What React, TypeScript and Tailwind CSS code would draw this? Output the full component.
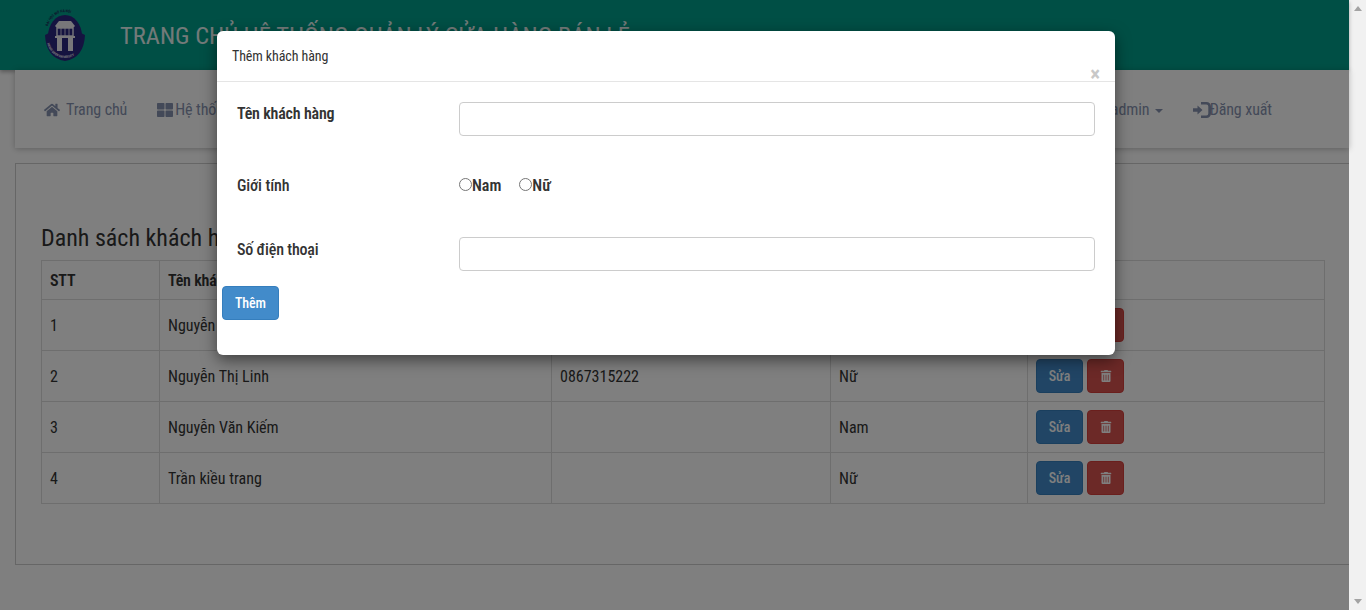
import React from 'react';
import { FaHome, FaThLarge, FaTrashAlt } from 'react-icons/fa';

const customers = [
  { id: 1, name: 'Nguyễn Văn Nam', phone: '0867315111', gender: 'Nam' },
  { id: 2, name: 'Nguyễn Thị Linh', phone: '0867315222', gender: 'Nữ' },
  { id: 3, name: 'Nguyễn Văn Kiếm', phone: '', gender: 'Nam' },
  { id: 4, name: 'Trần kiều trang', phone: '', gender: 'Nữ' },
];

const Logo = () => (
  <svg width="46" height="54" viewBox="0 0 46 54" className="shrink-0">
    {/* crest body */}
    <ellipse cx="23" cy="28" rx="17" ry="21" fill="#2a2680" />
    <path d="M3 27 L7 25 L7 30 Q9 45 23 47 Q37 45 39 30 L39 25 L43 27 Q42 50 23 53 Q4 50 3 27 Z" fill="#2a2680" />
    <path id="logo-top" d="M5 24 A18 20 0 0 1 41 24" fill="none" />
    <text fontSize="3.6" fontWeight="700" fill="#1c2c5a" fontFamily="Roboto, sans-serif">
      <textPath href="#logo-top" startOffset="10%">ĐẠI HỌC MỞ HÀ NỘI</textPath>
    </text>
    {/* gate */}
    <path d="M13 18 L17 13 L29 13 L33 18 L31 20 L15 20 Z" fill="#f0eef5" />
    <rect x="15" y="20" width="16" height="8" fill="none" stroke="#f0eef5" strokeWidth="1.4" />
    <path d="M19 20 V28 M23 20 V28 M27 20 V28" stroke="#f0eef5" strokeWidth="0.8" />
    <rect x="13" y="28" width="20" height="2" fill="#f0eef5" />
    <rect x="15" y="30" width="5" height="13" fill="#f0eef5" />
    <rect x="26" y="30" width="5" height="13" fill="#f0eef5" />
    <path id="logo-bottom" d="M5 32 A18 18 0 0 0 41 32" fill="none" />
    <text fontSize="3.3" fontWeight="700" fill="#e4e4f0" fontFamily="Roboto, sans-serif">
      <textPath href="#logo-bottom" startOffset="6%">HANOI OPEN UNIVERSITY</textPath>
    </text>
  </svg>
);

const SignInIcon = () => (
  <svg width="18" height="16" viewBox="0 0 18 16" fill="currentColor" className="shrink-0">
    <path d="M0 6.2h4.5V3.5L9.5 8l-5 4.5V9.8H0z" />
    <path d="M8 0h5.5A4.5 4.5 0 0 1 18 4.5v7a4.5 4.5 0 0 1-4.5 4.5H8v-2.6h5.3a2 2 0 0 0 2-2V4.6a2 2 0 0 0-2-2H8z" />
  </svg>
);

const App: React.FC = () => {
  return (
    <div className="flex h-[610px] w-[1366px] overflow-hidden font-['Roboto_Condensed','Roboto',sans-serif] [font-stretch:75%] text-[#333]">
      <div className="relative h-full w-[1349px] bg-white">
        {/* Header */}
        <div className="flex h-[70px] items-center bg-[#009e8a] pl-[42px] shadow-[0_2px_4px_rgba(0,0,0,0.3)]">
          <Logo />
          <h1 className="ml-[32px] pt-[2px] text-[24.5px] text-[#fff] opacity-90">TRANG CHỦ HỆ THỐNG QUẢN LÝ CỬA HÀNG BÁN LẺ</h1>
        </div>

        {/* Nav */}
        <div className="ml-[15px] flex h-[78px] items-center justify-between bg-white pl-[29px] pr-[77px] pt-[2px] text-[16px] tracking-[-0.1px] text-[#8793b0] shadow-[0_1px_6px_rgba(0,0,0,0.25)]">
          <div className="flex items-center">
            <span className="flex items-center gap-[6px]"><FaHome size={16} />Trang chủ</span>
            <span className="ml-[30px] flex items-center gap-[2px]"><FaThLarge size={16} />Hệ thống</span>
          </div>
          <div className="flex items-center">
            <span className="flex items-center">admin<span className="ml-[6px] mt-[2px] border-x-[4px] border-t-[4px] border-x-transparent border-t-[#8793b0]" /></span>
            <span className="ml-[30px] flex items-center"><SignInIcon /><span className="-ml-[2px]">Đăng xuất</span></span>
          </div>
        </div>

        {/* Customers panel */}
        <div className="ml-[15px] mt-[15px] h-[402px] border border-r-0 border-[#ccc] pl-[25px] pt-[56px]">
          <h2 className="mb-[4px] text-[24px] leading-[36px] text-[#333]">Danh sách khách hàng</h2>
          <table className="w-[1284px] table-fixed border-collapse text-[16px]">
            <thead>
              <tr className="h-[39px] font-semibold tracking-[-0.2px]">
                <td className="w-[118px] border border-[#ddd] px-[8px] pt-[2px]">STT</td>
                <td className="w-[392px] border border-[#ddd] px-[8px] pt-[2px]">Tên khách hàng</td>
                <td className="w-[279px] border border-[#ddd] px-[8px] pt-[2px]">Số điện thoại</td>
                <td className="w-[197px] border border-[#ddd] px-[8px] pt-[2px]">Giới tính</td>
                <td className="border border-[#ddd] px-[8px] pt-[2px]">Thao tác</td>
              </tr>
            </thead>
            <tbody>
              {customers.map((c) => (
                <tr key={c.id} className="h-[51px]">
                  <td className="border border-[#ddd] px-[8px] pt-[2px]">{c.id}</td>
                  <td className="border border-[#ddd] px-[8px] pt-[2px]">{c.name}</td>
                  <td className="border border-[#ddd] px-[8px] pt-[2px]">{c.phone}</td>
                  <td className="border border-[#ddd] px-[8px] pt-[2px]">{c.gender}</td>
                  <td className="border border-[#ddd] px-[8px]">
                    <div className="flex gap-[4px]">
                      <button className="h-[34px] w-[47px] rounded-[4px] border border-[#357ebd] bg-[#428bca] text-[14px] font-medium text-white">Sửa</button>
                      <button className="flex h-[34px] w-[37px] items-center justify-center rounded-[4px] border border-[#d43f3a] bg-[#d9534f] text-white"><FaTrashAlt size={12} /></button>
                    </div>
                  </td>
                </tr>
              ))}
            </tbody>
          </table>
        </div>

        {/* Backdrop */}
        <div className="absolute inset-0 bg-black/50" />

        {/* Modal */}
        <div className="absolute left-[217px] top-[31px] h-[324px] w-[898px] rounded-[6px] bg-white shadow-[0_5px_15px_rgba(0,0,0,0.5)]">
          <div className="relative flex h-[51px] items-center border-b border-[#e5e5e5] pl-[15px] text-[14px] tracking-[-0.1px] text-[#333]">
            Thêm khách hàng
            <span className="absolute right-[15px] top-[31px] text-[21px] font-bold leading-[24px] text-[#c8c8c8]">×</span>
          </div>
          <div className="flex pl-[20px] pr-[20px] pt-[20px]">
            <label className="w-[222px] pt-[1px] text-[16px] font-semibold leading-[22px] tracking-[-0.2px]">Tên khách hàng</label>
            <input className="h-[34px] flex-1 rounded-[4px] border border-[#ccc] bg-white" />
          </div>
          <div className="mt-[38px] flex items-center pl-[20px] text-[16px]">
            <label className="w-[222px] font-medium tracking-[-0.1px]">Giới tính</label>
            <span className="-mt-[1px] flex items-center font-semibold"><span className="-mt-[3px] h-[13px] w-[13px] rounded-full border border-[#767676]" />Nam</span>
            <span className="-mt-[1px] ml-[18px] flex items-center font-semibold"><span className="-mt-[3px] h-[13px] w-[13px] rounded-full border border-[#767676]" />Nữ</span>
          </div>
          <div className="mt-[39px] flex pl-[20px] pr-[20px]">
            <label className="w-[222px] pt-[2px] text-[16px] font-medium leading-[22px] tracking-[-0.2px]">Số điện thoại</label>
            <input className="h-[34px] flex-1 rounded-[4px] border border-[#ccc] bg-white" />
          </div>
          <button className="ml-[5px] mt-[15px] h-[34px] w-[57px] rounded-[4px] border border-[#357ebd] bg-[#428bca] text-[14px] font-medium tracking-[-0.1px] text-white">Thêm</button>
        </div>
      </div>

      {/* Scrollbar */}
      <div className="flex w-[17px] flex-col items-center justify-between bg-[#f1f1f1] py-[6px]">
        <span className="border-x-[4px] border-b-[5px] border-x-transparent border-b-[#a3a3a3]" />
        <span className="border-x-[4px] border-t-[5px] border-x-transparent border-t-[#a3a3a3]" />
      </div>
    </div>
  );
};

export default App;
